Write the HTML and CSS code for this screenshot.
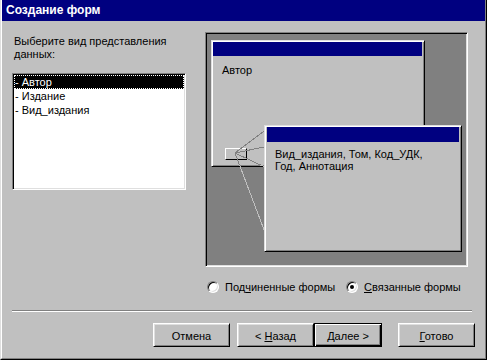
FILE: index.html
```html
<!DOCTYPE html>
<html lang="ru">
<head>
<meta charset="utf-8">
<title>Создание форм</title>
<link rel="stylesheet" href="styles.css">
</head>
<body>
<div class="window">
  <div class="frame">
    <div class="titlebar">Создание форм</div>
    <div class="main">
      <div class="left">
        <div class="prompt">Выберите вид представления<br>данных:</div>
        <div class="listbox">
          <div class="item selected">- Автор</div>
          <div class="item">- Издание</div>
          <div class="item">- Вид_издания</div>
        </div>
      </div>
      <div class="right">
        <div class="preview">
          <div class="form form1">
            <div class="form-title"></div>
            <div class="form-text">Автор</div>
            <div class="subbox"></div>
          </div>
          <svg class="links" width="261" height="233" viewBox="0 0 261 233" shape-rendering="crispEdges">
            <defs>
              <clipPath id="f1clip"><rect x="7" y="9" width="210" height="123"/></clipPath>
            </defs>
            <g stroke="#c0c0c0" stroke-width="1" fill="none">
              <line x1="29" y1="120" x2="61" y2="96"/>
              <line x1="29" y1="120" x2="63" y2="113"/>
              <line x1="29" y1="120" x2="63" y2="136"/>
              <line x1="29" y1="120" x2="60" y2="202"/>
            </g>
            <g stroke="#808080" stroke-width="1" fill="none" clip-path="url(#f1clip)">
              <line x1="29" y1="120" x2="61" y2="96"/>
              <line x1="29" y1="120" x2="63" y2="113"/>
              <line x1="29" y1="120" x2="63" y2="136"/>
              <line x1="29" y1="120" x2="60" y2="202"/>
            </g>
          </svg>
          <div class="form form2">
            <div class="form-title tall"></div>
            <div class="form-text fields">Вид_издания, Том, Код_УДК,<br>Год, Аннотация</div>
          </div>
        </div>
        <div class="radios">
          <label class="radio first"><span class="circle"></span><span>Под<u>ч</u>иненные формы</span></label>
          <label class="radio"><span class="circle checked"></span><span><u>С</u>вязанные формы</span></label>
        </div>
      </div>
    </div>
    <div class="separator"></div>
    <div class="buttons">
      <div class="btn"><span>Отмена</span></div>
      <div class="btn back"><span>&lt; <u>Н</u>азад</span></div>
      <div class="btn default"><span><u>Д</u>алее &gt;</span></div>
      <div class="btn finish"><span><u>Г</u>отово</span></div>
    </div>
  </div>
</div>
</body>
</html>
```

FILE: styles.css
```css
html, body {
  margin: 0;
  padding: 0;
  background: #c0c0c0;
}

body {
  font-family: "Liberation Sans", Arial, sans-serif;
  font-size: 11px;
  color: #000;
}

.window {
  width: 487px;
  height: 360px;
  box-sizing: border-box;
  border-left: 1px solid #dfdfdf;
  border-right: 1px solid #000;
  border-bottom: 1px solid #000;
  background: #c0c0c0;
}

.frame {
  height: 100%;
  box-sizing: border-box;
  border-left: 1px solid #fff;
  border-right: 1px solid #808080;
  border-bottom: 1px solid #808080;
  display: flex;
  flex-direction: column;
}

.titlebar {
  height: 21px;
  box-sizing: border-box;
  background: #000080;
  color: #fff;
  font-weight: bold;
  font-size: 12px;
  padding: 3px 0 0 4px;
  line-height: 15px;
  flex: none;
}

.main {
  height: 289px;
  flex: none;
  box-sizing: border-box;
  padding: 11px 0 0 10px;
  display: flex;
  gap: 19px;
}

.left {
  width: 174px;
  display: flex;
  flex-direction: column;
}

.prompt {
  margin-top: 3px;
  padding-left: 2px;
  line-height: 13px;
}

.listbox {
  margin-top: 12px;
  height: 117px;
  box-sizing: border-box;
  background: #fff;
  border: 1px solid;
  border-color: #808080 #fff #fff #808080;
  box-shadow: inset 1px 1px #000, inset -1px -1px #dfdfdf;
  padding: 1px;
}

.item {
  height: 14px;
  line-height: 14px;
  padding-left: 1px;
  white-space: nowrap;
}

.item.selected {
  background: #000;
  color: #fff;
  outline: 1px dotted #fff;
  outline-offset: -1px;
}

.right {
  width: 263px;
  display: flex;
  flex-direction: column;
}

.preview {
  position: relative;
  width: 263px;
  height: 235px;
  box-sizing: border-box;
  background: #808080;
  border: 1px solid;
  border-color: #808080 #fff #fff #808080;
  box-shadow: inset 1px 1px #000, inset -1px -1px #dfdfdf;
  overflow: hidden;
}

.form {
  position: absolute;
  box-sizing: border-box;
  background: #c0c0c0;
  border: 1px solid;
  border-color: #dfdfdf #000 #000 #dfdfdf;
  box-shadow: inset 1px 1px #fff, inset -1px -1px #808080;
}

.form1 {
  left: 5px;
  top: 7px;
  width: 214px;
  height: 127px;
  padding: 1px 2px 0 1px;
}

.form2 {
  left: 58px;
  top: 92px;
  width: 198px;
  height: 127px;
  padding: 1px 2px 0 2px;
}

.form-title {
  height: 14px;
  background: #000080;
}

.form-title.tall {
  height: 15px;
}

.form-text {
  margin-top: 8px;
  padding-left: 9px;
  line-height: 13px;
  white-space: nowrap;
}

.form-text.fields {
  margin-top: 6px;
  padding-left: 8px;
  line-height: 12px;
}

.subbox {
  position: absolute;
  left: 13px;
  top: 107px;
  width: 22px;
  height: 12px;
  box-sizing: border-box;
  border: 1px solid;
  border-color: #fff #000 #000 #fff;
}

.links {
  position: absolute;
  left: 0;
  top: 0;
}

.radios {
  margin-top: 13px;
  display: flex;
  align-items: center;
  height: 14px;
}

.radio {
  display: flex;
  align-items: center;
  gap: 6px;
  white-space: nowrap;
}

.radio.first {
  margin-left: 2px;
  width: 139px;
}

.circle {
  position: relative;
  width: 12px;
  height: 12px;
  box-sizing: border-box;
  border-radius: 50%;
  border: 1px solid;
  border-color: #808080 #fff #fff #808080;
  background: #fff;
  box-shadow: inset 1px 1px #000, inset -1px -1px #dfdfdf;
  flex: none;
}

.circle.checked::after {
  content: "";
  position: absolute;
  left: 3px;
  top: 3px;
  width: 4px;
  height: 4px;
  border-radius: 50%;
  background: #000;
}

.separator {
  flex: none;
  height: 0;
  margin: 0 13px 0 10px;
  border-top: 1px solid #808080;
  border-bottom: 1px solid #fff;
}

.buttons {
  flex: none;
  margin-top: 11px;
  display: flex;
  justify-content: flex-end;
  padding-right: 10px;
}

.btn {
  width: 77px;
  height: 24px;
  box-sizing: border-box;
  border: 1px solid;
  border-color: #fff #000 #000 #fff;
  box-shadow: inset 1px 1px #dfdfdf, inset -1px -1px #808080;
  display: flex;
  align-items: center;
  justify-content: center;
  padding-top: 1px;
  white-space: pre;
}

.btn.back {
  margin-left: 7px;
}

.btn.default {
  width: 68px;
  border-color: #000;
  box-shadow: inset 1px 1px #fff, inset -1px -1px #000, inset -2px -2px #808080;
}

.btn.finish {
  margin-left: 16px;
}
```
